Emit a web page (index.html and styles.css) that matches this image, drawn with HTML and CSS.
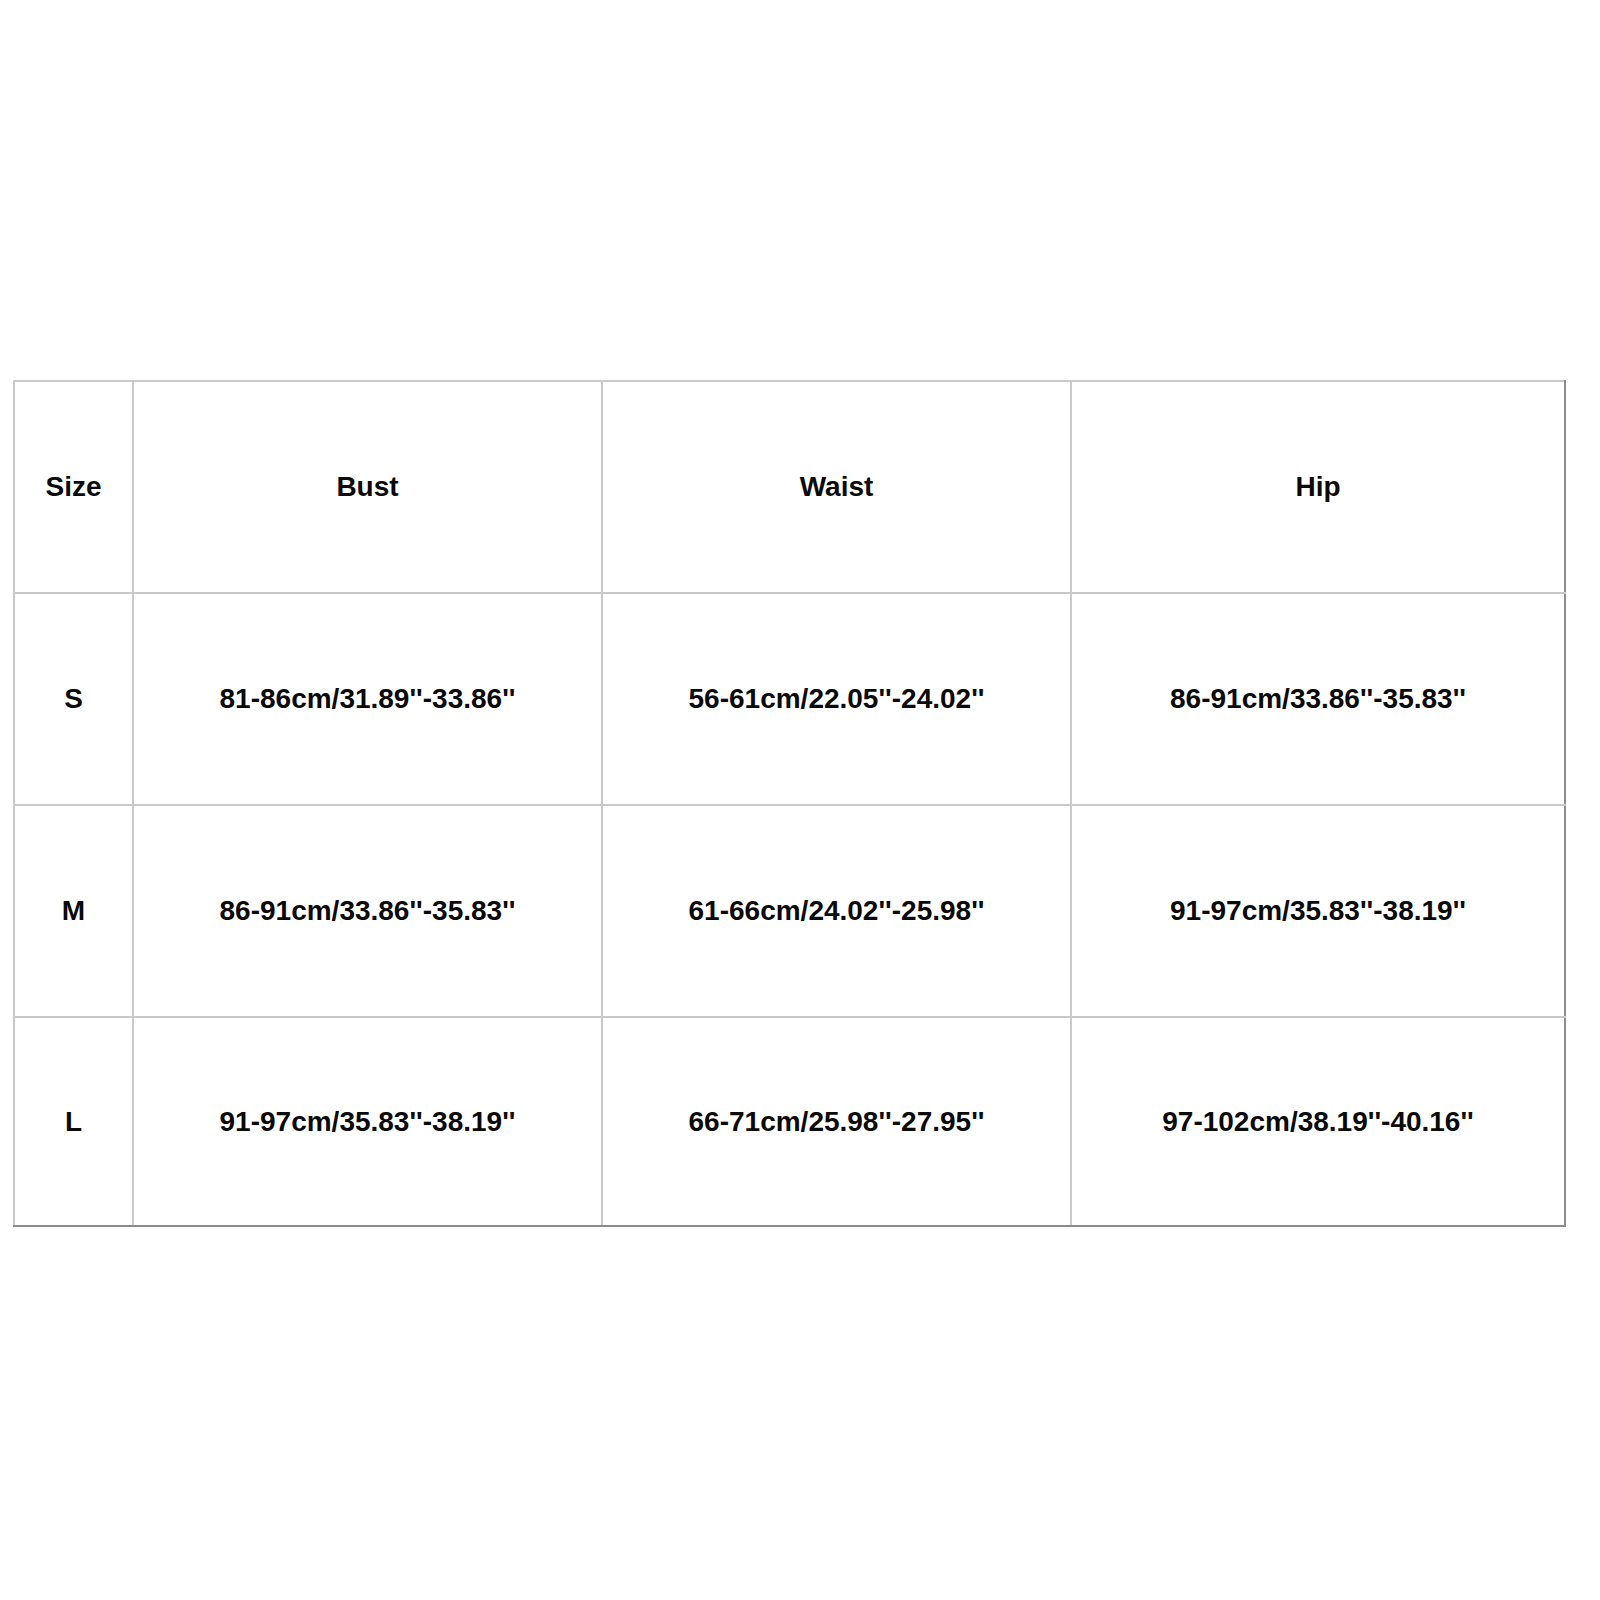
FILE: index.html
```html
<!DOCTYPE html>
<html>
<head>
<meta charset="utf-8">
<link rel="stylesheet" href="styles.css">
</head>
<body>
<div class="page">
  <table class="size-table">
    <colgroup>
      <col class="c-size">
      <col class="c-mid">
      <col class="c-mid">
      <col class="c-last">
    </colgroup>
    <tr><td>Size</td><td>Bust</td><td>Waist</td><td>Hip</td></tr>
    <tr><td>S</td><td>81-86cm/31.89''-33.86''</td><td>56-61cm/22.05''-24.02''</td><td>86-91cm/33.86''-35.83''</td></tr>
    <tr><td>M</td><td>86-91cm/33.86''-35.83''</td><td>61-66cm/24.02''-25.98''</td><td>91-97cm/35.83''-38.19''</td></tr>
    <tr class="last-row"><td>L</td><td>91-97cm/35.83''-38.19''</td><td>66-71cm/25.98''-27.95''</td><td>97-102cm/38.19''-40.16''</td></tr>
  </table>
</div>
</body>
</html>
```
FILE: styles.css
```css
html, body {
  margin: 0;
  padding: 0;
  background: #ffffff;
}
.page {
  width: 1600px;
  height: 1600px;
  padding: 380px 0 0 13px;
  box-sizing: border-box;
}
.size-table {
  border-collapse: collapse;
  table-layout: fixed;
  width: 1551px;
  font-family: "Liberation Sans", Arial, sans-serif;
  font-weight: bold;
  font-size: 28px;
  color: #0a0a0a;
}
.c-size { width: 119px; }
.c-mid { width: 469px; }
.c-last { width: 494px; }
.size-table td {
  border: 2px solid #c9c9c9;
  height: 210px;
  padding: 0;
  text-align: center;
  vertical-align: middle;
}
.size-table .last-row td {
  height: 207px;
  border-bottom-color: #8c8c8c;
}
.size-table tr td:last-child {
  border-right-color: #8c8c8c;
}
```
